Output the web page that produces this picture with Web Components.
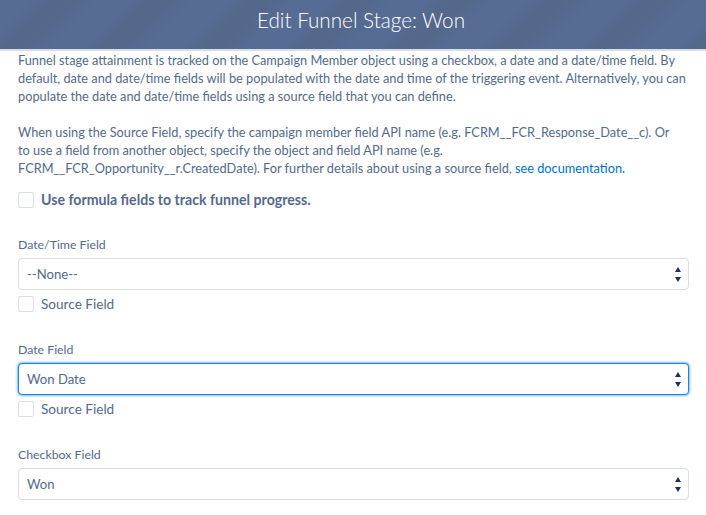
<!DOCTYPE html>
<html>
<head>
<meta charset="utf-8" />
<title>Edit Funnel Stage</title>
<style>
  body {
    margin: 0;
    background: #fff;
    font-family: "Lato", "Open Sans", sans-serif;
    font-size: 12.75px;
    color: #54698d;
    overflow: hidden;
  }
</style>
<template id="modal-header">
  <style>
    :host {
      display: block;
      height: 49px;
      line-height: 41px;
      padding-left: 16px;
      text-align: center;
      font-size: 20.7px;
      font-weight: 300;
      color: #fff;
      border-bottom: 2px solid #d8dde6;
      background: repeating-linear-gradient(135deg, #576c95 0 22px, #53688a 36px 50px, #576c95 70px);
    }
  </style>
  <slot></slot>
</template>
<template id="check-row">
  <style>
    :host { display: flex; align-items: center; gap: 7px; height: 17px; }
    .box {
      width: 16px; height: 16px; flex: none;
      border: 1px solid #d8dde6; border-radius: 2px; background: #fff; box-sizing: border-box;
    }
    :host([strong]) { font-weight: 700; font-size: 14.15px; }
    :host([large]) { font-size: 13.6px; height: 16px; }
  </style>
  <span class="box"></span><slot></slot>
</template>
<template id="select-field">
  <style>
    :host { display: block; margin-bottom: 29px; }
    .label { font-size: 12.3px; line-height: 18px; margin-bottom: 4px; }
    .select {
      height: 32px; box-sizing: border-box; display: flex; align-items: center;
      justify-content: space-between;
      padding: 0 7px 0 8px;
      border: 1px solid #d8dde6; border-radius: 4px; background: #fff;
      font-size: 13.1px;
    }
    :host([focused]) .select { border-color: #1589ee; box-shadow: 0 0 3px #0070d2; }
    svg { width: 6px; height: 15px; fill: #16325c; }
    .extra { margin-top: 6px; }
  </style>
  <div class="label"></div>
  <div class="select"><span class="value"></span>
    <svg viewBox="0 0 6 15"><path d="M3 0 6 5H0zM0 10H6L3 15z"/></svg>
  </div>
  <check-row class="extra" large>Source Field</check-row>
</template>
<script>
  class ModalHeader extends HTMLElement {
    constructor() {
      super();
      this.attachShadow({ mode: 'open' });
      this.shadowRoot.append(document.getElementById('modal-header').content.cloneNode(true));
    }
  }
  class CheckRow extends HTMLElement {
    constructor() {
      super();
      this.attachShadow({ mode: 'open' });
      this.shadowRoot.append(document.getElementById('check-row').content.cloneNode(true));
    }
  }
  class SelectField extends HTMLElement {
    constructor() {
      super();
      this.attachShadow({ mode: 'open' });
      this.shadowRoot.append(document.getElementById('select-field').content.cloneNode(true));
      this.shadowRoot.querySelector('.label').textContent = this.getAttribute('label');
      this.shadowRoot.querySelector('.value').textContent = this.getAttribute('value');
      if (!this.hasAttribute('source')) this.shadowRoot.querySelector('.extra').remove();
    }
  }
  class FunnelForm extends HTMLElement {
    constructor() {
      super();
      this.attachShadow({ mode: 'open' }).innerHTML = `
        <style>
          :host { display: block; padding: 0 17px 0 18px; line-height: 18px; }
          p { margin: 0 0 18px; white-space: nowrap; }
          p:last-child { margin-bottom: 14px; }
          a { color: #0070d2; text-decoration: none; }
          .use { margin: 0 0 28px; }
        </style>
        <div class="intro">
          <p>Funnel stage attainment is tracked on the Campaign Member object using a checkbox, a date and a date/time field. By<br>default, date and date/time fields will be populated with the date and time of the triggering event. Alternatively, you can<br>populate the date and date/time fields using a source field that you can define.</p>
          <p>When using the Source Field, specify the campaign member field API name (e.g. FCRM__FCR_Response_Date__c). Or<br>to use a field from another object, specify the object and field API name (e.g.<br>FCRM__FCR_Opportunity__r.CreatedDate). For further details about using a source field, <a>see documentation.</a></p>
        </div>
        <check-row class="use" strong>Use formula fields to track funnel progress.</check-row>
        <select-field label="Date/Time Field" value="--None--" source></select-field>
        <select-field label="Date Field" value="Won Date" source focused></select-field>
        <select-field label="Checkbox Field" value="Won"></select-field>`;
    }
  }
  customElements.define('modal-header', ModalHeader);
  customElements.define('check-row', CheckRow);
  customElements.define('select-field', SelectField);
  customElements.define('funnel-form', FunnelForm);
</script>
</head>
<body>
  <modal-header>Edit Funnel Stage: Won</modal-header>
  <funnel-form></funnel-form>
</body>
</html>
